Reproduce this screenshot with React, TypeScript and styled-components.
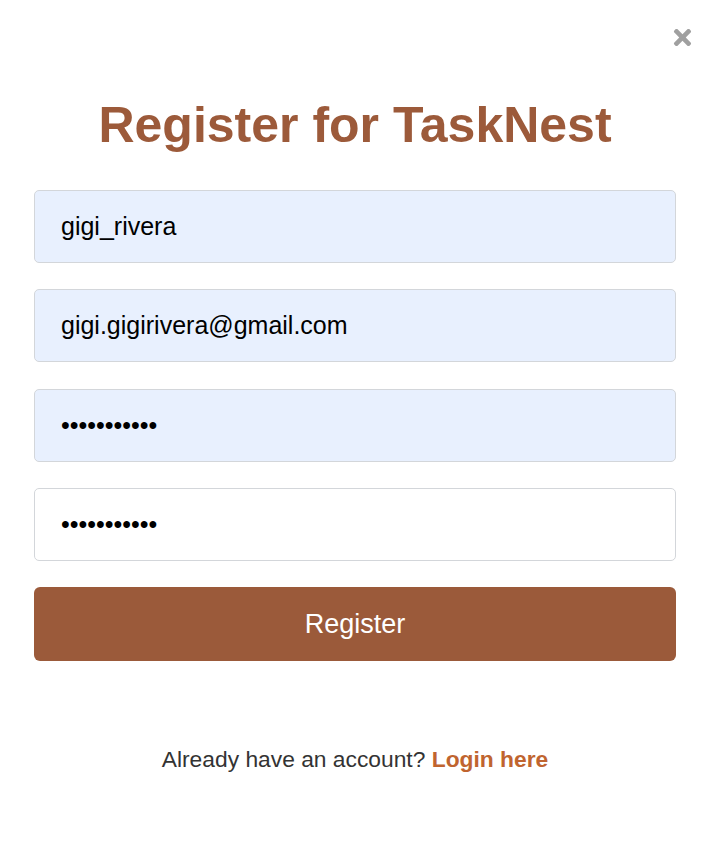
import styled, { createGlobalStyle } from "styled-components";
import { FaTimes } from "react-icons/fa";

const GlobalStyle = createGlobalStyle`
  body {
    margin: 0;
    background: #fff;
    font-family: "Liberation Sans", Arial, sans-serif;
  }
`;

const Modal = styled.div`
  position: relative;
  width: 712px;
  min-height: 845px;
  box-sizing: border-box;
  padding: 93px 36px 0 34px;
`;

const CloseButton = styled(FaTimes)`
  position: absolute;
  top: 25px;
  right: 17px;
  font-size: 25px;
  color: #a0a0a0;
  cursor: pointer;
`;

const Title = styled.h1`
  margin: 0 0 33px;
  text-align: center;
  font-size: 50px;
  line-height: 64px;
  font-weight: 700;
  color: #9c5a3a;
`;

const Form = styled.form`
  display: flex;
  flex-direction: column;
  gap: 26.33px;
`;

const Input = styled.input<{ $filled?: boolean }>`
  height: 73px;
  box-sizing: border-box;
  padding: 0 26px;
  border: 1px solid #d3d6da;
  border-radius: 5px;
  background: ${(p) => (p.$filled ? "#e8f0fe" : "#fff")};
  font-family: "Liberation Sans", Arial, sans-serif;
  font-size: 25px;
  color: #000;
  outline: none;
`;

const SubmitButton = styled.button`
  height: 74px;
  border: none;
  border-radius: 6px;
  background: #9b5a3a;
  color: #fff;
  font-family: "Liberation Sans", Arial, sans-serif;
  font-size: 27px;
  cursor: pointer;
`;

const Footer = styled.p`
  margin: 85px 0 0;
  text-align: center;
  font-size: 22.8px;
  color: #333;
`;

const LoginLink = styled.a`
  color: #c0642f;
  font-weight: 700;
  text-decoration: none;
`;

export default function App() {
  return (
    <>
      <GlobalStyle />
      <Modal>
        <CloseButton />
        <Title>Register for TaskNest</Title>
        <Form onSubmit={(e) => e.preventDefault()}>
          <Input $filled type="text" defaultValue="gigi_rivera" />
          <Input $filled type="email" defaultValue="gigi.gigirivera@gmail.com" />
          <Input $filled type="password" defaultValue="gigirivera1" />
          <Input type="password" defaultValue="gigirivera1" />
          <SubmitButton type="submit">Register</SubmitButton>
        </Form>
        <Footer>
          Already have an account? <LoginLink href="#">Login here</LoginLink>
        </Footer>
      </Modal>
    </>
  );
}
